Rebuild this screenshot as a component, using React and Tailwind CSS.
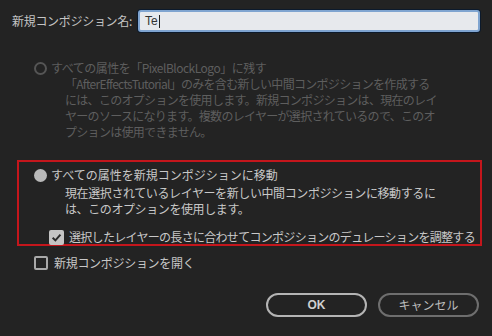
const jp = { fontFamily: '"Noto Sans CJK JP", "Noto Sans", sans-serif' };

function Radio({ checked, disabled }) {
  if (checked) {
    return <span className="block h-[13px] w-[13px] shrink-0 rounded-full bg-[#b9b9b9]" />;
  }
  return (
    <span
      className={
        'block h-[13px] w-[13px] shrink-0 rounded-full border-2 ' +
        (disabled ? 'border-[#555555]' : 'border-[#b0b0b0]')
      }
    />
  );
}

function Checkbox({ checked }) {
  if (checked) {
    return (
      <span className="flex h-[15px] w-[15px] shrink-0 items-center justify-center rounded-[2px] bg-[#c4c4c4]">
        <svg width="11" height="11" viewBox="0 0 10 10">
          <path d="M1.5 5.2 L4 7.6 L8.6 2.4" fill="none" stroke="#2a2a2a" strokeWidth="1.8" />
        </svg>
      </span>
    );
  }
  return <span className="block h-[14px] w-[14px] shrink-0 rounded-[2px] border-2 border-[#a8a8a8] bg-[#232323]" />;
}

export default function App() {
  return (
    <div
      className="h-[336px] w-[492px] overflow-hidden whitespace-nowrap bg-[#232323] text-[12px] leading-[16px]"
      style={jp}
    >
      {/* name row */}
      <div className="flex items-center pl-[12px] pt-[10px]">
        <span className="w-[126px] tracking-[-0.3px] text-[#c4c4c4]">新規コンポジション名:</span>
        <div className="flex h-[22px] w-[342px] items-center rounded-[3px] border-2 border-[#7fa4d0] bg-[#e7e9ed] pl-[5px] shadow-[0_0_0_1px_#0c1a2c]">
          <span className="text-[12px] text-[#333]" style={{ fontFamily: '"Liberation Sans", sans-serif' }}>Te</span>
          <span className="ml-[1px] h-[13px] w-px bg-[#222]" />
        </div>
      </div>

      {/* disabled option */}
      <div className="mt-[28px] pl-[34px] text-[#5e5e5e]">
        <div className="flex items-center gap-[4px]">
          <Radio disabled />
          <span className="tracking-[-0.5px]">すべての属性を「PixelBlockLogo」に残す</span>
        </div>
        <div className="pl-[31px] tracking-[-0.7px]">
          <div>「AfterEffectsTutorial」のみを含む新しい中間コンポジションを作成する</div>
          <div>には、このオプションを使用します。新規コンポジションは、現在のレイ</div>
          <div>ヤーのソースになります。複数のレイヤーが選択されているので、このオ</div>
          <div>プションは使用できません。</div>
        </div>
      </div>

      {/* highlighted option */}
      <div className="ml-[17px] mr-[10px] mt-[20px] h-[86px] border-2 border-[#c4161c] pl-[15px] pt-[5px] text-[#c8c8c8]">
        <div className="flex items-center gap-[4px]">
          <Radio checked />
          <span>すべての属性を新規コンポジションに移動</span>
        </div>
        <div className="mt-[2px] pl-[31px] tracking-[-0.4px]">
          <div>現在選択されているレイヤーを新しい中間コンポジションに移動するに</div>
          <div>は、このオプションを使用します。</div>
        </div>
        <div className="mt-[12px] flex items-center gap-[5px] pl-[15px]">
          <Checkbox checked />
          <span className="tracking-[-0.7px]">選択したレイヤーの長さに合わせてコンポジションのデュレーションを調整する</span>
        </div>
      </div>

      <div className="mt-[9px] flex items-center gap-[6px] pl-[34px] text-[#c8c8c8]">
        <Checkbox />
        <span className="tracking-[-0.3px]">新規コンポジションを開く</span>
      </div>

      {/* buttons */}
      <div className="mt-[22px] flex justify-end gap-[11px] pr-[13px]">
        <button
          className="h-[24px] w-[101px] rounded-full border-2 border-[#b4b4b4] text-[12px] font-bold text-[#d0d0d0]"
          style={{ fontFamily: '"Liberation Sans", sans-serif' }}
        >
          OK
        </button>
        <button className="h-[24px] w-[101px] rounded-full border-2 border-[#6e6e6e] text-[12px] text-[#bcbcbc]" style={jp}>
          キャンセル
        </button>
      </div>
    </div>
  );
}
